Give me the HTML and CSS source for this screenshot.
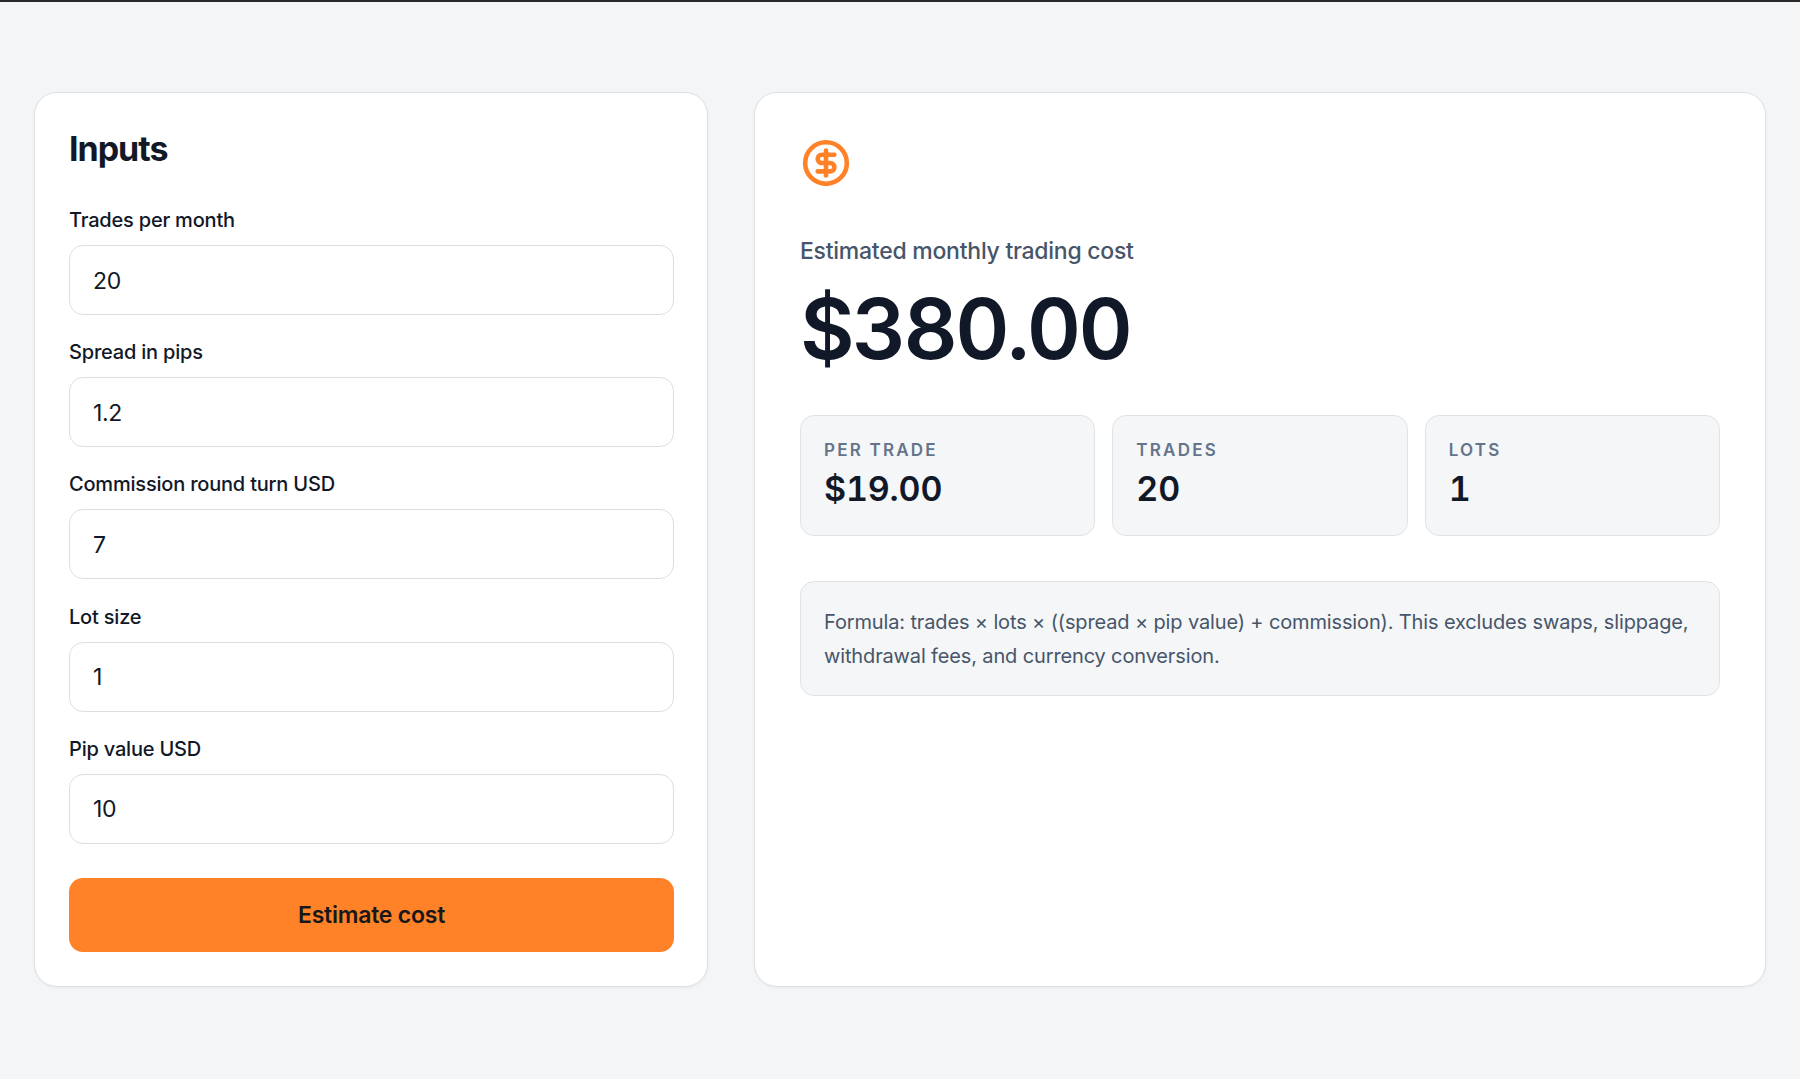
FILE: index.html
```html
<!DOCTYPE html>
<html lang="en">
<head>
    <meta charset="UTF-8">
    <meta name="viewport" content="width=device-width, initial-scale=1.0">
    <title>Trading Cost Calculator</title>
    <link rel="stylesheet" href="styles.css">
</head>
<body>

    <main class="calculator">
        <!-- Inputs -->
        <form class="card inputs-card" id="costForm">
            <h2>Inputs</h2>
            <div class="field">
                <label for="trades">Trades per month</label>
                <input type="text" id="trades" value="20">
            </div>
            <div class="field">
                <label for="spread">Spread in pips</label>
                <input type="text" id="spread" value="1.2">
            </div>
            <div class="field">
                <label for="commission">Commission round turn USD</label>
                <input type="text" id="commission" value="7">
            </div>
            <div class="field">
                <label for="lots">Lot size</label>
                <input type="text" id="lots" value="1">
            </div>
            <div class="field">
                <label for="pipValue">Pip value USD</label>
                <input type="text" id="pipValue" value="10">
            </div>
            <button type="submit" class="estimate-btn">Estimate cost</button>
        </form>

        <!-- Result -->
        <section class="card result-card">
            <svg class="icon" viewBox="0 0 24 24" fill="none" stroke="currentColor" stroke-width="2.2" stroke-linecap="round" stroke-linejoin="round">
                <circle cx="12" cy="12" r="10"/>
                <path d="M16 8h-6a2 2 0 1 0 0 4h4a2 2 0 1 1 0 4H8"/>
                <path d="M12 18V6"/>
            </svg>
            <p class="result-label">Estimated monthly trading cost</p>
            <p class="total" id="total">$380.00</p>
            <div class="stats">
                <div class="stat">
                    <p class="stat-label">Per trade</p>
                    <p class="stat-value" id="perTrade">$19.00</p>
                </div>
                <div class="stat">
                    <p class="stat-label">Trades</p>
                    <p class="stat-value" id="tradeCount">20</p>
                </div>
                <div class="stat">
                    <p class="stat-label">Lots</p>
                    <p class="stat-value" id="lotCount">1</p>
                </div>
            </div>
            <p class="formula">Formula: trades × lots × ((spread × pip value) + commission). This excludes swaps, slippage, withdrawal fees, and currency conversion.</p>
        </section>
    </main>

    <script>
        const number = id => parseFloat(document.getElementById(id).value) || 0;
        const show = (id, text) => document.getElementById(id).textContent = text;

        document.getElementById('costForm').addEventListener('submit', e => {
            e.preventDefault();
            const perTrade = number('lots') * (number('spread') * number('pipValue') + number('commission'));
            show('total', '$' + (perTrade * number('trades')).toFixed(2));
            show('perTrade', '$' + perTrade.toFixed(2));
            show('tradeCount', number('trades'));
            show('lotCount', number('lots'));
        });
    </script>
</body>
</html>
```
FILE: styles.css
```css
* {
    margin: 0;
    padding: 0;
    box-sizing: border-box;
}

body {
    min-height: 100vh;
    border-top: 2px solid #28282b;
    background-color: #f4f5f7;
    color: #111827;
    font-family: Inter, sans-serif;
}

.calculator {
    display: grid;
    grid-template-columns: 674px 1012px;
    gap: 46px;
    height: 985px;
    padding: 90px 34px 0;
}

.card {
    background-color: #fff;
    border: 1px solid #dde1e4;
    border-radius: 23px;
    box-shadow: 0 1px 3px rgba(15, 23, 42, 0.05);
}

.inputs-card {
    display: flex;
    flex-direction: column;
    padding: 33px 33px 34px 34px;
}

.inputs-card h2 {
    margin-bottom: 34px;
    font-size: 34px;
    font-weight: 700;
    line-height: 46px;
    letter-spacing: -0.03em;
}

.field {
    margin-bottom: 23.2px;
}

.field label {
    display: block;
    margin-bottom: 11px;
    font-size: 20px;
    font-weight: 500;
    line-height: 28px;
    letter-spacing: -0.01em;
}

.field input {
    display: block;
    width: 100%;
    height: 70px;
    padding: 1px 23px 0;
    border: 1px solid #dcdfe2;
    border-radius: 14px;
    background-color: #fff;
    color: #111827;
    font-family: inherit;
    font-size: 23px;
    letter-spacing: -0.015em;
}

.estimate-btn {
    height: 74px;
    margin-top: 11px;
    border: none;
    border-radius: 14px;
    background-color: #ff8228;
    color: #18181b;
    font-family: inherit;
    font-size: 23px;
    font-weight: 600;
    letter-spacing: -0.01em;
    cursor: pointer;
}

.result-card {
    padding: 45px;
}

.icon {
    display: block;
    width: 50px;
    height: 50px;
    margin-left: 0.5px;
    color: #ff8228;
}

.result-label {
    margin-top: 46px;
    color: #475569;
    font-size: 23px;
    font-weight: 500;
    line-height: 34px;
    letter-spacing: -0.011em;
}

.total {
    margin-top: 18px;
    font-size: 84px;
    font-weight: 600;
    line-height: 86px;
    letter-spacing: -0.032em;
    font-variant-numeric: tabular-nums;
}

.stats {
    display: grid;
    grid-template-columns: repeat(3, 1fr);
    gap: 17px;
    margin-top: 43px;
}

.stat {
    height: 121px;
    padding: 23px;
    background-color: #f4f6f8;
    border: 1px solid #dfe3e6;
    border-radius: 14px;
}

.stat-label {
    color: #64748b;
    font-size: 17px;
    font-weight: 600;
    line-height: 23px;
    letter-spacing: 0.13em;
    text-transform: uppercase;
}

.stat-value {
    margin-top: 4px;
    font-size: 34px;
    font-weight: 600;
    line-height: 46px;
    letter-spacing: -0.005em;
    font-variant-numeric: tabular-nums;
}

.formula {
    margin-top: 45px;
    padding: 23px 23px 22px;
    background-color: #f4f6f8;
    border: 1px solid #dfe3e6;
    border-radius: 14px;
    color: #475569;
    font-size: 20px;
    line-height: 34px;
    letter-spacing: -0.007em;
}
```
